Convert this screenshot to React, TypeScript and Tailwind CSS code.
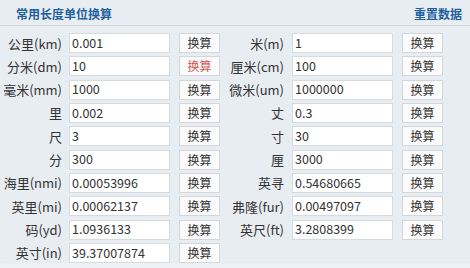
import React from "react";

const left: [string, string][] = [
  ["公里(km)", "0.001"],
  ["分米(dm)", "10"],
  ["毫米(mm)", "1000"],
  ["里", "0.002"],
  ["尺", "3"],
  ["分", "300"],
  ["海里(nmi)", "0.00053996"],
  ["英里(mi)", "0.00062137"],
  ["码(yd)", "1.0936133"],
  ["英寸(in)", "39.37007874"],
];
const right: [string, string][] = [
  ["米(m)", "1"],
  ["厘米(cm)", "100"],
  ["微米(um)", "1000000"],
  ["丈", "0.3"],
  ["寸", "30"],
  ["厘", "3000"],
  ["英寻", "0.54680665"],
  ["弗隆(fur)", "0.00497097"],
  ["英尺(ft)", "3.2808399"],
];

const font = { fontFamily: '"Microsoft YaHei", "Noto Sans CJK SC", "Noto Sans", sans-serif' };

function Cell({ label, value, labelW, gap, red }: { label: string; value: string; labelW: string; gap: string; red?: boolean }) {
  return (
    <div className="flex items-center">
      <div className={`${labelW} ${gap} text-right text-[13px] leading-none text-[#333]`}>{label}</div>
      <div className="w-[101px] h-[20px] bg-white border border-[#d6dbe0] flex items-center pl-[2px] text-[12.5px] text-[#333] leading-none">
        {value}
      </div>
      <div
        className={`ml-[9px] w-[41px] h-[20px] bg-[#fbfbfb] border border-[#d3d7db] flex items-center justify-center text-[12px] leading-none ${
          red ? "text-[#d9534f]" : "text-[#333]"
        }`}
      >
        换算
      </div>
    </div>
  );
}

export default function App() {
  return (
    <div className="w-[470px] h-[268px] bg-[#e8edf2] overflow-hidden relative" style={font}>
      <div className="h-[26px] border-b border-[#d3d9df] flex items-center justify-between pt-[3px] pl-[16px] pr-[8px]">
        <span className="text-[12px] font-bold text-[#1f5f9e] leading-none">常用长度单位换算</span>
        <span className="text-[12px] font-bold text-[#1f5f9e] leading-none">重置数据</span>
      </div>
      <div className="mt-[7px] flex flex-col gap-[3.33px]">
        {left.map((l, i) => (
          <div key={i} className="flex items-center">
            <Cell label={l[0]} value={l[1]} labelW="w-[62px]" gap="mr-[7px]" red={i === 1} />
            {right[i] ? (
              <Cell label={right[i][0]} value={right[i][1]} labelW="w-[64px]" gap="mr-[8px]" />
            ) : null}
          </div>
        ))}
      </div>
      <div className="absolute left-0 right-0 bottom-0 h-[5px] bg-[#edf1f5]" />
    </div>
  );
}
